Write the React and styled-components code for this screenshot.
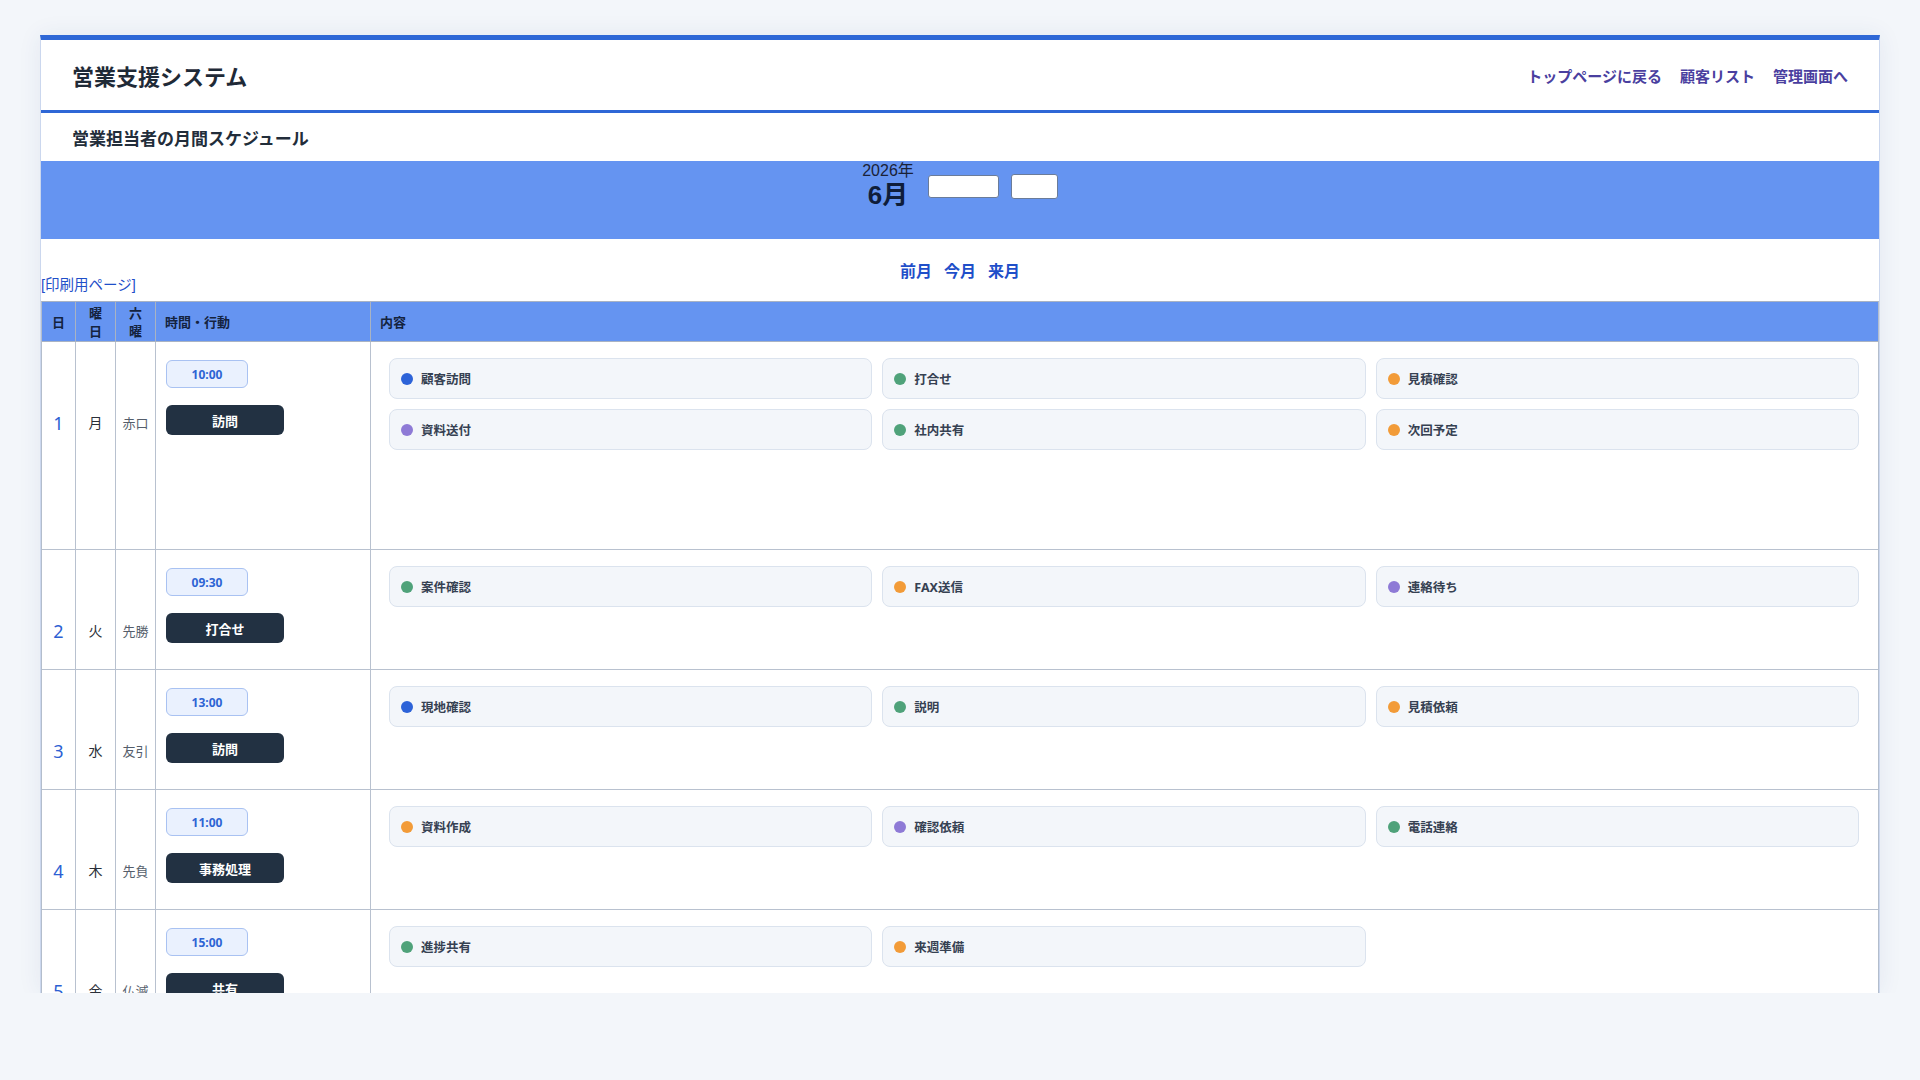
import React from "react";
import styled, { createGlobalStyle } from "styled-components";

const GlobalStyle = createGlobalStyle`
  html, body {
    margin: 0;
    background: #f3f6fa;
  }
  body {
    font-family: "Noto Sans", "Noto Sans CJK JP", sans-serif;
    color: #1f2a37;
  }
`;

const DOT = {
  blue: "#2d63d8",
  green: "#4fa27a",
  orange: "#f29b38",
  purple: "#8e7ad6",
};

const days = [
  {
    day: 1, week: "月", rokuyo: "赤口", time: "10:00", action: "訪問", tall: true,
    items: [
      ["顧客訪問", "blue"], ["打合せ", "green"], ["見積確認", "orange"],
      ["資料送付", "purple"], ["社内共有", "green"], ["次回予定", "orange"],
    ],
  },
  {
    day: 2, week: "火", rokuyo: "先勝", time: "09:30", action: "打合せ",
    items: [["案件確認", "green"], ["FAX送信", "orange"], ["連絡待ち", "purple"]],
  },
  {
    day: 3, week: "水", rokuyo: "友引", time: "13:00", action: "訪問",
    items: [["現地確認", "blue"], ["説明", "green"], ["見積依頼", "orange"]],
  },
  {
    day: 4, week: "木", rokuyo: "先負", time: "11:00", action: "事務処理",
    items: [["資料作成", "orange"], ["確認依頼", "purple"], ["電話連絡", "green"]],
  },
  {
    day: 5, week: "金", rokuyo: "仏滅", time: "15:00", action: "共有",
    items: [["進捗共有", "green"], ["来週準備", "orange"]],
  },
];

function App() {
  return (
    <>
      <GlobalStyle />
      <Page>
        <Panel>
          <Header>
            <Title>営業支援システム</Title>
            <Nav>
              <NavLink href="#">トップページに戻る</NavLink>
              <NavLink href="#">顧客リスト</NavLink>
              <NavLink href="#">管理画面へ</NavLink>
            </Nav>
          </Header>
          <SubTitle>営業担当者の月間スケジュール</SubTitle>

          <Band>
            <BandRow>
              <DateBlock>
                <Year>2026年</Year>
                <Month>6月</Month>
              </DateBlock>
              <Field $w={71} $h={23} />
              <Field $w={47} $h={25} />
            </BandRow>
          </Band>

          <MonthNav>
            <MonthLink href="#">前月</MonthLink>
            <MonthLink href="#">今月</MonthLink>
            <MonthLink href="#">来月</MonthLink>
          </MonthNav>
          <PrintLink href="#">[印刷用ページ]</PrintLink>

          <Table>
            <HeadRow>
              <HeadCell $center>日</HeadCell>
              <HeadCell $center>曜<br />日</HeadCell>
              <HeadCell $center>六<br />曜</HeadCell>
              <HeadCell>時間・行動</HeadCell>
              <HeadCell $last>内容</HeadCell>
            </HeadRow>

            {days.map((d) => (
              <BodyRow key={d.day} $tall={d.tall}>
                <DayCell>{d.day}</DayCell>
                <WeekCell>{d.week}</WeekCell>
                <RokuyoCell>{d.rokuyo}</RokuyoCell>
                <TimeCell>
                  <TimeBadge>{d.time}</TimeBadge>
                  <ActionButton>{d.action}</ActionButton>
                </TimeCell>
                <ContentCell>
                  {d.items.map(([label, tone]) => (
                    <Chip key={label}>
                      <Dot $color={DOT[tone]} />
                      <ChipText>{label}</ChipText>
                    </Chip>
                  ))}
                </ContentCell>
              </BodyRow>
            ))}
          </Table>
        </Panel>
      </Page>
    </>
  );
}

const Page = styled.div`
  padding: 35px 40px 0;
`;

const Panel = styled.div`
  box-sizing: border-box;
  height: 958px;
  overflow: hidden;
  background: #fff;
  border-left: 1px solid #cbd7ee;
  border-right: 1px solid #cbd7ee;
  border-top: 5px solid #2e67d6;
  box-shadow: 0 0 22px rgba(40, 70, 130, 0.08);
`;

const Header = styled.header`
  box-sizing: border-box;
  height: 73px;
  padding: 0 31px;
  display: flex;
  align-items: center;
  justify-content: space-between;
  border-bottom: 3px solid #2e67d6;
`;

const Title = styled.h1`
  margin: 0;
  font-family: "Noto Sans CJK JP", sans-serif;
  font-size: 22px;
  font-weight: 700;
  color: #1f2a37;
`;

const Nav = styled.nav`
  display: flex;
  gap: 18px;
`;

const NavLink = styled.a`
  font-family: "Noto Sans CJK JP", sans-serif;
  font-size: 15px;
  font-weight: 700;
  color: #4a3f9f;
  text-decoration: none;
`;

const SubTitle = styled.h2`
  box-sizing: border-box;
  height: 48px;
  margin: 0;
  padding: 1px 31px 0;
  display: flex;
  align-items: center;
  font-family: "Noto Sans CJK JP", sans-serif;
  font-size: 17px;
  font-weight: 700;
  color: #222d3a;
`;

const Band = styled.div`
  height: 78px;
  background: #6594f1;
  display: flex;
  justify-content: center;
`;

const BandRow = styled.div`
  display: flex;
  align-items: center;
  height: 50px;
`;

const DateBlock = styled.div`
  display: flex;
  flex-direction: column;
  align-items: center;
  font-family: "Liberation Sans", "Noto Sans CJK JP", sans-serif;
  margin-right: 14px;
`;

const Year = styled.span`
  font-size: 16px;
  line-height: 18px;
  color: #1a2238;
`;

const Month = styled.span`
  font-size: 26px;
  line-height: 30px;
  font-weight: 700;
  color: #0f1d3a;
`;

const Field = styled.div`
  box-sizing: border-box;
  width: ${(p) => p.$w}px;
  height: ${(p) => p.$h}px;
  background: #fff;
  border: 1px solid #6b7c99;
  border-radius: 3px;
  & + & {
    margin-left: 12px;
  }
`;

const MonthNav = styled.div`
  display: flex;
  justify-content: center;
  gap: 12px;
  padding-top: 24px;
  height: 14px;
  line-height: 14px;
`;

const MonthLink = styled.a`
  font-family: "Noto Sans CJK JP", sans-serif;
  font-size: 16px;
  font-weight: 700;
  color: #1f4fc9;
  text-decoration: none;
`;

const PrintLink = styled.a`
  display: block;
  height: 16px;
  line-height: 16px;
  font-family: "Liberation Sans", "Noto Sans CJK JP", sans-serif;
  font-size: 14.5px;
  color: #1f4fc9;
  text-decoration: none;
`;

const Table = styled.div`
  margin-top: 8px;
  border-left: 1px solid #b3bdcc;
  border-right: 1px solid #b3bdcc;
  border-top: 1px solid #a9b3c3;
`;

const columns = "34px 40px 40px 215px 1fr";

const HeadRow = styled.div`
  display: grid;
  grid-template-columns: ${columns};
  height: 39px;
  background: #6594f1;
  border-bottom: 1px solid #a9b3c3;
`;

const HeadCell = styled.div`
  display: flex;
  align-items: center;
  justify-content: ${(p) => (p.$center ? "center" : "flex-start")};
  text-align: center;
  padding: ${(p) => (p.$center ? "0" : "0 9px")};
  border-right: ${(p) => (p.$last ? "none" : "1px solid #a9b3c3")};
  font-family: "Noto Sans CJK JP", sans-serif;
  font-size: 13px;
  line-height: 18px;
  font-weight: 700;
  color: #14233f;
`;

const BodyRow = styled.div`
  display: grid;
  grid-template-columns: ${columns};
  min-height: ${(p) => (p.$tall ? 207 : 119)}px;
  border-bottom: 1px solid #b8c1cf;
`;

const SideCell = styled.div`
  border-right: 1px solid #b8c1cf;
  padding-top: 72px;
  text-align: center;
  line-height: 18px;
  font-family: "Noto Sans", "Noto Sans CJK JP", sans-serif;
`;

const DayCell = styled(SideCell)`
  font-size: 18px;
  color: #2d5fd3;
`;

const WeekCell = styled(SideCell)`
  font-size: 14px;
  color: #2a2f38;
`;

const RokuyoCell = styled(SideCell)`
  font-size: 13px;
  color: #555e6b;
`;

const TimeCell = styled.div`
  border-right: 1px solid #b8c1cf;
  padding: 18px 10px;
  display: flex;
  flex-direction: column;
  align-items: flex-start;
`;

const TimeBadge = styled.div`
  box-sizing: border-box;
  width: 82px;
  height: 28px;
  display: flex;
  align-items: center;
  justify-content: center;
  background: #eaf1fe;
  border: 1px solid #a9c2f2;
  border-radius: 6px;
  font-size: 12px;
  font-weight: 700;
  color: #2e64d4;
`;

const ActionButton = styled.div`
  margin-top: 17px;
  width: 118px;
  height: 30px;
  display: flex;
  align-items: center;
  justify-content: center;
  background: #223142;
  border-radius: 6px;
  font-family: "Noto Sans CJK JP", sans-serif;
  font-size: 13px;
  font-weight: 700;
  color: #fff;
`;

const ContentCell = styled.div`
  padding: 16px 19px 16px 18px;
  display: grid;
  grid-template-columns: repeat(3, 1fr);
  gap: 10px;
  align-content: start;
`;

const Chip = styled.div`
  box-sizing: border-box;
  height: 41px;
  display: flex;
  align-items: center;
  gap: 8px;
  padding: 0 11px;
  background: #f3f6fa;
  border: 1px solid #dbe3ee;
  border-radius: 8px;
`;

const Dot = styled.span`
  width: 12px;
  height: 12px;
  border-radius: 50%;
  background: ${(p) => p.$color};
  flex-shrink: 0;
`;

const ChipText = styled.span`
  font-family: "Noto Sans", "Noto Sans CJK JP", sans-serif;
  font-size: 12.5px;
  font-weight: 700;
  color: #364152;
`;

export default App;
